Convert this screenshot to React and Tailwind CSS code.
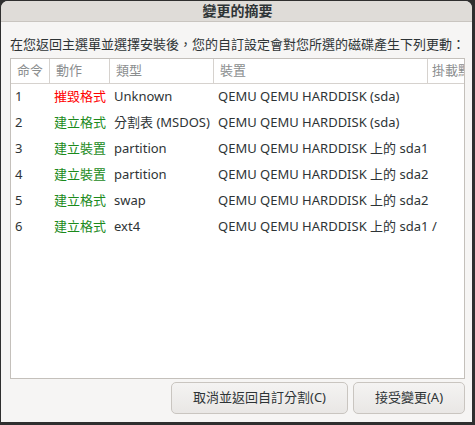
import React from 'react'

const rows = [
  { n: '1', act: '摧毀格式', red: true, type: 'Unknown', dev: 'QEMU QEMU HARDDISK (sda)', mnt: '' },
  { n: '2', act: '建立格式', type: '分割表 (MSDOS)', dev: 'QEMU QEMU HARDDISK (sda)', mnt: '' },
  { n: '3', act: '建立裝置', type: 'partition', dev: 'QEMU QEMU HARDDISK 上的 sda1', mnt: '' },
  { n: '4', act: '建立裝置', type: 'partition', dev: 'QEMU QEMU HARDDISK 上的 sda2', mnt: '' },
  { n: '5', act: '建立格式', type: 'swap', dev: 'QEMU QEMU HARDDISK 上的 sda2', mnt: '' },
  { n: '6', act: '建立格式', type: 'ext4', dev: 'QEMU QEMU HARDDISK 上的 sda1', mnt: '/' },
]

const App = () => {
  return (
    <div className="w-[475px] h-[425px] bg-[#2f2f2f] pt-[1px] pl-[1px] pr-[3px] pb-[3px] overflow-hidden"
      style={{ fontFamily: '"Noto Sans", "Noto Sans CJK TC", sans-serif' }}>
      <div className="h-full flex flex-col rounded-t-[7px] overflow-hidden bg-[#f6f5f4]">
        <div className="h-[21px] shrink-0 bg-[#dfdcd8] border-b border-[#c9c5c0] flex items-center justify-center">
          <span className="text-[14px] font-bold text-[#2e3436] leading-none pl-[2px]">變更的摘要</span>
        </div>
        <div className="flex-1 flex flex-col pl-[9px] pr-[7px]">
          <div className="pt-[12px] h-[35px] text-[13px] leading-[20px] text-[#2e3436] whitespace-nowrap">
            在您返回主選單並選擇安裝後，您的自訂設定會對您所選的磁碟產生下列更動：
          </div>
          <div className="h-[321px] mt-[1px] border border-[#c4c0bb] bg-white overflow-hidden">
            <div className="grid grid-cols-[38px_60px_104px_214px_1fr] h-[25px] border-b border-[#d6d2ce] text-[13px] text-[#8b8e8f]">
              <div className="px-[6px] flex items-center">命令</div>
              <div className="px-[6px] flex items-center border-l border-[#d6d2ce]">動作</div>
              <div className="px-[6px] flex items-center border-l border-[#d6d2ce]">類型</div>
              <div className="px-[6px] flex items-center border-l border-[#d6d2ce]">裝置</div>
              <div className="pl-[4px] flex items-center border-l border-[#d6d2ce] whitespace-nowrap overflow-hidden">掛載點</div>
            </div>
            <div>
              {rows.map((r) => (
                <div key={r.n} className="grid grid-cols-[38px_60px_104px_214px_1fr] h-[26px] items-center text-[13px] text-[#2e3436] whitespace-nowrap">
                  <div className="pl-[4px]">{r.n}</div>
                  <div className={r.red ? 'pl-[5px] text-[#ff0000]' : 'pl-[5px] text-[#1b8a1b]'}>{r.act}</div>
                  <div className="pl-[5px]">{r.type}</div>
                  <div className="pl-[5px]">{r.dev}</div>
                  <div className="pl-[5px]">{r.mnt}</div>
                </div>
              ))}
            </div>
          </div>
          <div className="flex justify-end gap-[5px] mt-[3px]">
            <button className="w-[177px] h-[32px] rounded-[5px] border border-[#c9c5c0] bg-gradient-to-b from-[#f4f3f2] to-[#e9e7e5] text-[13px] text-[#2e3436]">
              取消並返回自訂分割(C)
            </button>
            <button className="w-[112px] h-[32px] rounded-[5px] border border-[#c9c5c0] bg-gradient-to-b from-[#f4f3f2] to-[#e9e7e5] text-[13px] text-[#2e3436]">
              接受變更(A)
            </button>
          </div>
        </div>
      </div>
    </div>
  )
}

export default App
